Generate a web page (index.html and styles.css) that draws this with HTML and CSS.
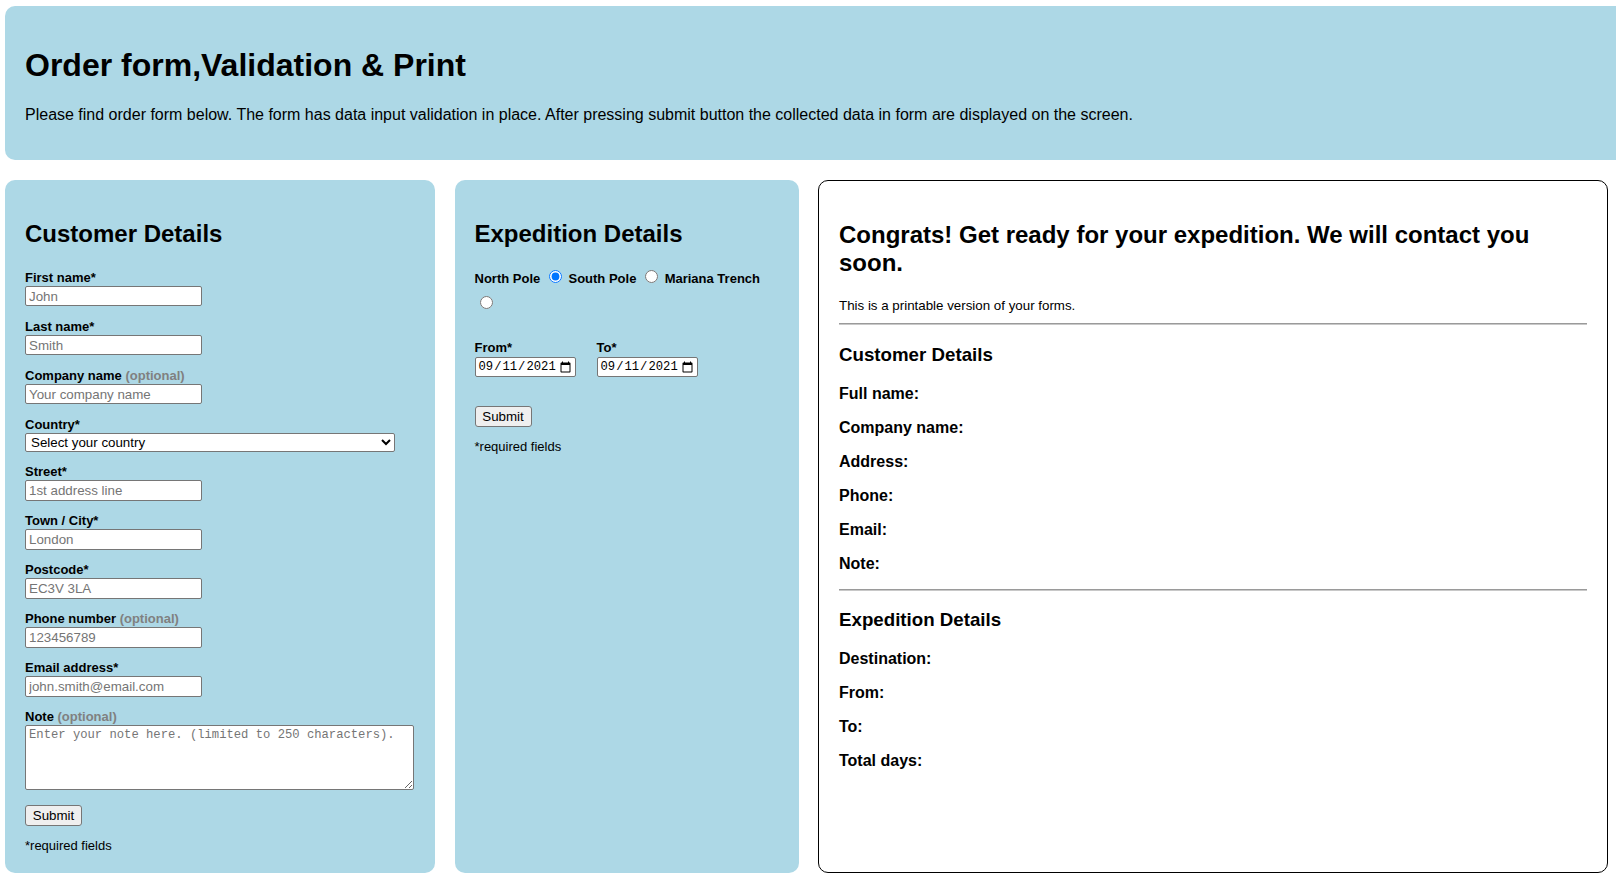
FILE: index.html
```html
<!DOCTYPE html>
<html lang="en">
<head>
<meta charset="utf-8">
<title>Order form, Validation &amp; Print</title>
<link rel="stylesheet" href="styles.css">
</head>
<body>
<header class="page-header">
  <h1 class="header-title">Order form,Validation &amp; Print</h1>
  <p class="header-text">Please find order form below. The form has data input validation in place. After pressing submit button the collected data in form are displayed on the screen.</p>
</header>

<main class="layout">
  <section class="panel">
    <h2 class="section-title">Customer Details</h2>
    <label class="field-label">First name*</label>
    <input class="text-input" type="text" placeholder="John">
    <label class="field-label">Last name*</label>
    <input class="text-input" type="text" placeholder="Smith">
    <label class="field-label">Company name <span class="optional">(optional)</span></label>
    <input class="text-input" type="text" placeholder="Your company name">
    <label class="field-label">Country*</label>
    <select class="select-input">
      <option>Select your country</option>
    </select>
    <label class="field-label">Street*</label>
    <input class="text-input" type="text" placeholder="1st address line">
    <label class="field-label">Town / City*</label>
    <input class="text-input" type="text" placeholder="London">
    <label class="field-label">Postcode*</label>
    <input class="text-input" type="text" placeholder="EC3V 3LA">
    <label class="field-label">Phone number <span class="optional">(optional)</span></label>
    <input class="text-input" type="text" placeholder="123456789">
    <label class="field-label">Email address*</label>
    <input class="text-input" type="text" placeholder="john.smith@email.com">
    <label class="field-label">Note <span class="optional">(optional)</span></label>
    <textarea class="note-input" placeholder="Enter your note here. (limited to 250 characters)."></textarea>
    <button class="submit-btn" type="button">Submit</button>
    <div class="required-note">*required fields</div>
  </section>

  <section class="panel">
    <h2 class="section-title">Expedition Details</h2>
    <div class="radio-group"><label>North Pole</label> <input class="radio" type="radio" name="dest" checked> <label>South Pole</label> <input class="radio" type="radio" name="dest"> <label>Mariana Trench</label> <input class="radio" type="radio" name="dest"></div>
    <div class="date-row">
      <div class="date-field">
        <label class="date-label">From*</label>
        <input class="date-input" type="date" value="2021-09-11">
      </div>
      <div class="date-field">
        <label class="date-label">To*</label>
        <input class="date-input" type="date" value="2021-09-11">
      </div>
    </div>
    <button class="submit-btn submit-mid" type="button">Submit</button>
    <div class="required-note">*required fields</div>
  </section>

  <section class="panel panel-print">
    <h2 class="print-title">Congrats! Get ready for your expedition. We will contact you soon.</h2>
    <div class="print-note">This is a printable version of your forms.</div>
    <hr class="divider">
    <h3 class="print-subtitle">Customer Details</h3>
    <p class="print-row">Full name:</p>
    <p class="print-row">Company name:</p>
    <p class="print-row">Address:</p>
    <p class="print-row">Phone:</p>
    <p class="print-row">Email:</p>
    <p class="print-row">Note:</p>
    <hr class="divider">
    <h3 class="print-subtitle">Expedition Details</h3>
    <p class="print-row">Destination:</p>
    <p class="print-row">From:</p>
    <p class="print-row">To:</p>
    <p class="print-row">Total days:</p>
  </section>
</main>
</body>
</html>
```

FILE: styles.css
```css
html, body {
  margin: 0;
  padding: 0;
}

body {
  overflow-x: hidden;
  font-family: "Liberation Sans", Arial, sans-serif;
  font-size: 16px;
  color: #000;
  background: #fff;
}

.page-header {
  background: #add8e6;
  border-radius: 10px;
  margin: 6px 0 0 5px;
  padding: 20px;
  width: 100%;
}

.header-title {
  font-size: 32px;
  font-weight: bold;
  margin: 21.44px 0;
}

.header-text {
  margin: 16px 0;
}

.layout {
  display: grid;
  grid-template-columns: 430px 344px 1fr;
  column-gap: 19.5px;
  margin: 20px 8px 0 5px;
}

.panel {
  background: #add8e6;
  border-radius: 10px;
  padding: 20px;
}

.panel-print {
  background: #fff;
  border: 1px solid #000;
}

.section-title {
  font-size: 24px;
  font-weight: bold;
  margin: 19.92px 0 21px;
}

.field-label {
  display: block;
  font-size: 13px;
  font-weight: bold;
  line-height: 17px;
}

.optional {
  color: #808080;
}

.text-input {
  display: block;
  box-sizing: border-box;
  width: 177px;
  height: 20.5px;
  margin: 0 0 11.5px;
  padding: 1px 3px;
  border: 1px solid #767676;
  border-radius: 2px;
  background: #fff;
  font-family: "Liberation Sans", Arial, sans-serif;
  font-size: 13.33px;
}

.text-input::placeholder,
.note-input::placeholder {
  color: #757575;
}

.select-input {
  display: block;
  box-sizing: border-box;
  width: 370px;
  height: 19.5px;
  margin: 0 0 11px;
  padding: 0 1px;
  border: 1px solid #767676;
  border-radius: 2px;
  background: #fff;
  color: #000;
  font-family: "Liberation Sans", Arial, sans-serif;
  font-size: 13.33px;
}

.note-input {
  display: block;
  box-sizing: border-box;
  width: 389px;
  height: 65px;
  margin: 0 0 15px;
  padding: 2px 3px;
  border: 1px solid #767676;
  border-radius: 2px;
  background: #fff;
  font-family: "Liberation Mono", "Courier New", monospace;
  font-size: 12.2px;
}

.submit-btn {
  display: block;
  box-sizing: border-box;
  width: 57px;
  height: 21px;
  margin: 0 0 12px;
  padding: 1px 6px;
  border: 1px solid #767676;
  border-radius: 3px;
  background: #efefef;
  color: #000;
  font-family: "Liberation Sans", Arial, sans-serif;
  font-size: 13.33px;
}

.submit-mid {
  margin-top: 29px;
  margin-bottom: 11.5px;
}

.required-note {
  font-size: 13px;
  line-height: 15px;
}

.radio-group {
  font-size: 13px;
  font-weight: bold;
  line-height: 26px;
  margin-top: -3px;
}

.radio {
  width: 13px;
  height: 13px;
  margin: 3px 3px 0 5px;
}

.date-row {
  display: flex;
  gap: 21px;
  margin-top: 21px;
}

.date-label {
  display: block;
  font-size: 13px;
  font-weight: bold;
  line-height: 18px;
}

.date-input {
  display: block;
  box-sizing: border-box;
  width: 101px;
  height: 20.5px;
  padding: 1px 1px 1px 2px;
  border: 1px solid #767676;
  border-radius: 2px;
  background: #fff;
  font-family: "Liberation Mono", "Courier New", monospace;
  font-size: 12.2px;
}

.print-title {
  font-size: 24px;
  font-weight: bold;
  margin: 19.92px 0;
}

.print-note {
  font-size: 13.33px;
  line-height: 18.4px;
}

.divider {
  margin: 8px 0;
  border: none;
  border-top: 1px solid #9a9a9a;
  border-bottom: 1px solid #c8c8c8;
}

.print-subtitle {
  font-size: 18.72px;
  font-weight: bold;
  margin: 18.72px 0;
}

.print-row {
  margin: 16px 0;
  font-weight: bold;
}
```
